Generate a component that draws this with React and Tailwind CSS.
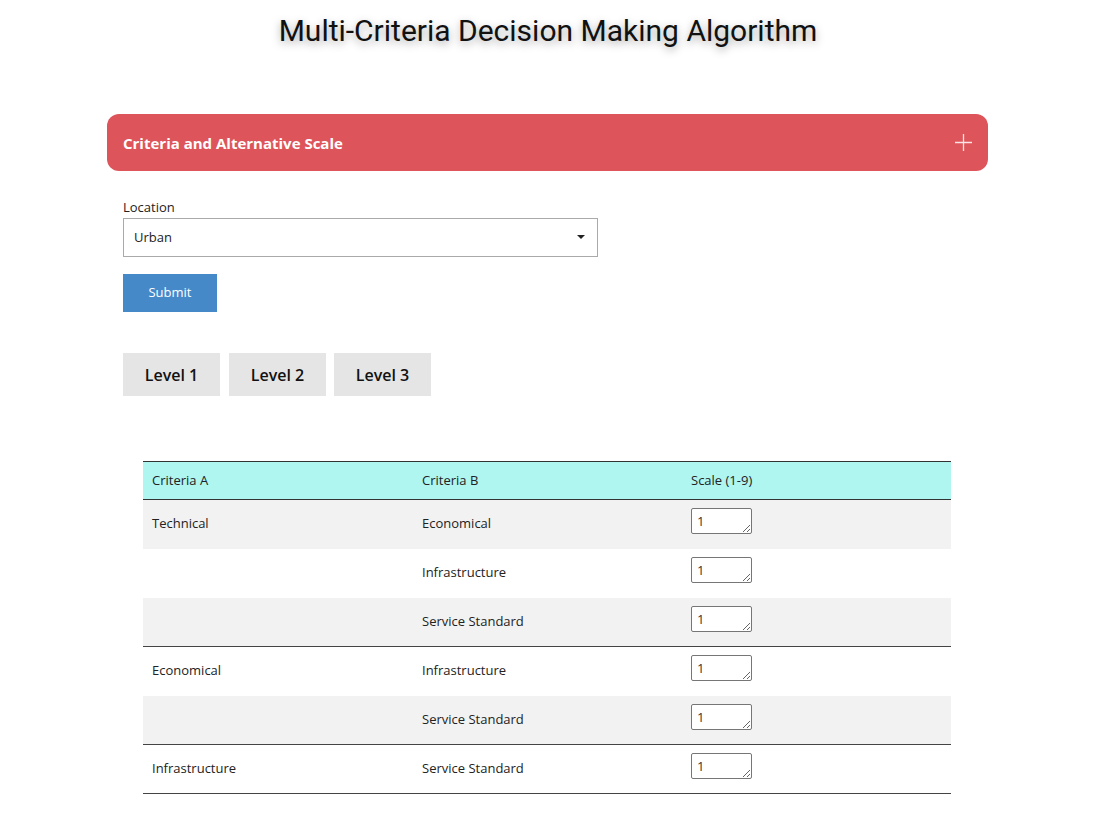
import React, { useState } from 'react';

const rows = [
  { a: 'Technical', b: 'Economical', gray: true },
  { a: '', b: 'Infrastructure', gray: false },
  { a: '', b: 'Service Standard', gray: true, border: true },
  { a: 'Economical', b: 'Infrastructure', gray: false },
  { a: '', b: 'Service Standard', gray: true, border: true },
  { a: 'Infrastructure', b: 'Service Standard', gray: false, border: true },
];

const App = () => {
  const [location, setLocation] = useState('Urban');

  return (
    <div className="min-h-[837px] bg-white pr-[21px] font-['Open_Sans',sans-serif] text-[#222]">
      <h1 className="pt-[11px] text-center font-['Roboto',sans-serif] text-[30px] leading-[40px] text-[#111] [text-shadow:0_3px_8px_rgba(0,0,0,0.35)]">
        Multi-Criteria Decision Making Algorithm
      </h1>

      <div className="ml-[107px] mt-[63px] w-[881px]">
        <div className="flex h-[57px] items-center justify-between rounded-[12px] bg-[#dd545a] pl-4 pr-4">
          <span className="pt-[1px] text-[15px] font-bold text-white">Criteria and Alternative Scale</span>
          <svg width="17" height="17" viewBox="0 0 17 17">
            <path d="M0 8.5h17M8.5 0v17" stroke="#fff" strokeOpacity="0.85" strokeWidth="1.3" />
          </svg>
        </div>

        <div className="px-4 pt-[28px]">
          <label className="block text-[13px] leading-[16px] text-[#222]">Location</label>
          <div className="relative mt-[3px] w-[475px]">
            <select
              value={location}
              onChange={(e) => setLocation(e.target.value)}
              className="h-[39px] w-full appearance-none border border-[#aaa] bg-white pl-[10px] text-[13px] text-[#222] outline-none"
            >
              <option>Urban</option>
              <option>Rural</option>
            </select>
            <span className="pointer-events-none absolute right-[13px] top-[17px] h-0 w-0 border-x-[4px] border-t-[4px] border-x-transparent border-t-[#222]" />
          </div>

          <button className="mt-[17px] h-[38px] w-[94px] bg-[#4589c9] text-[13px] text-white">
            Submit
          </button>

          <div className="mt-[41px] flex gap-[9px]">
            {['Level 1', 'Level 2', 'Level 3'].map((l) => (
              <button
                key={l}
                className="h-[43px] w-[97px] bg-[#e5e5e5] text-[16px] font-semibold text-[#111] last:ml-[-1px]"
              >
                {l}
              </button>
            ))}
          </div>

          <table className="ml-[20px] mt-[65px] w-[808px] border-collapse text-[13px] text-[#222]">
            <thead>
              <tr className="h-[38px] border-y border-[#333] bg-[#aff5f0] text-left">
                <th className="w-[270px] px-[9px] font-normal">Criteria A</th>
                <th className="w-[269px] px-[9px] font-normal">Criteria B</th>
                <th className="px-[9px] font-normal">Scale (1-9)</th>
              </tr>
            </thead>
            <tbody>
              {rows.map((r, i) => (
                <tr
                  key={i}
                  className={`h-[49px] ${r.gray ? 'bg-[#f2f2f2]' : 'bg-white'} ${r.border ? 'border-b border-[#444]' : ''}`}
                >
                  <td className="px-[9px] pb-[1px]">{r.a}</td>
                  <td className="px-[9px] pb-[1px]">{r.b}</td>
                  <td className="px-[9px] pt-[8px] align-top">
                    <textarea
                      defaultValue="1"
                      className="block h-[26px] w-[61px] resize rounded-[2px] border border-[#767676] bg-white px-[5px] pt-[4px] text-[13px] leading-[16px] text-[#333]"
                    />
                  </td>
                </tr>
              ))}
            </tbody>
          </table>
        </div>
      </div>
    </div>
  );
};

export default App;
